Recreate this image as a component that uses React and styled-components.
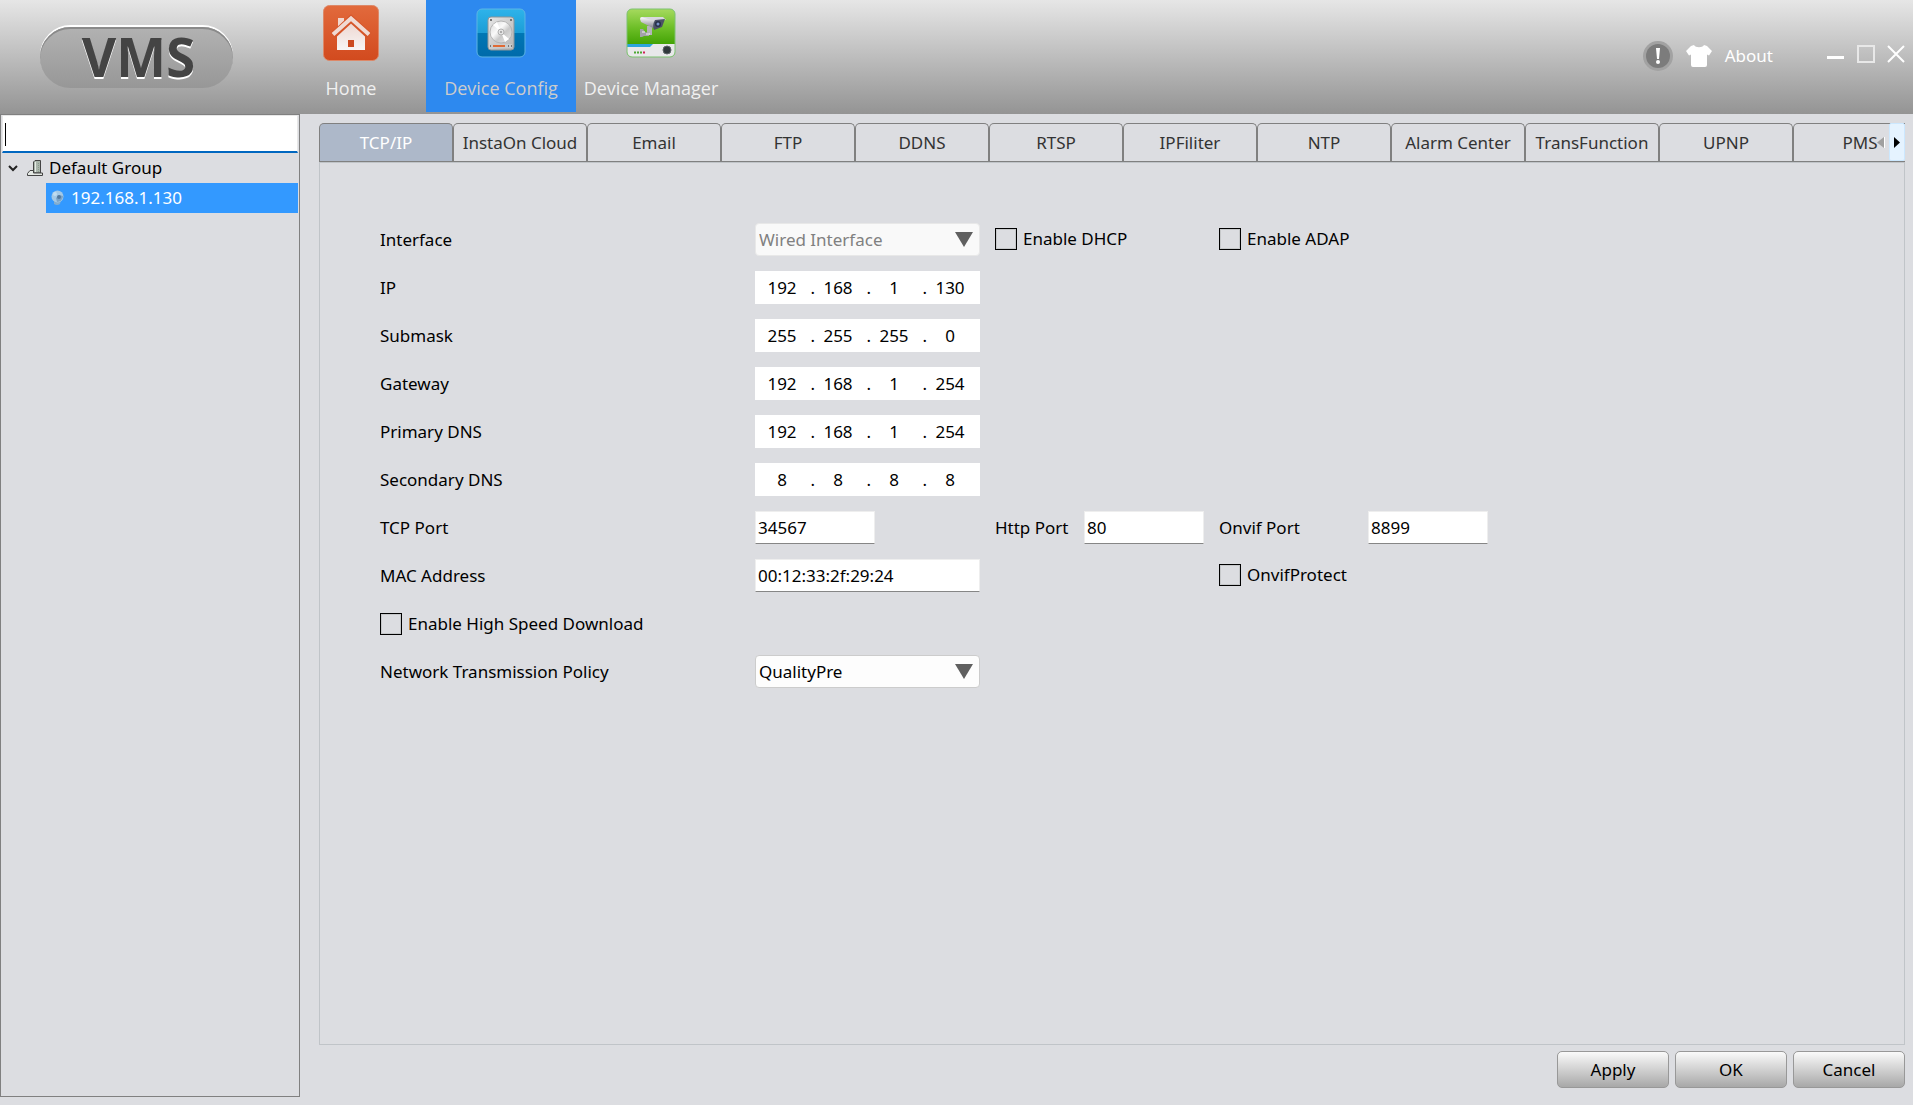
import React, { useState } from 'react'
import styled, { createGlobalStyle } from 'styled-components'

const tabs = [
    'TCP/IP', 'InstaOn Cloud', 'Email', 'FTP', 'DDNS', 'RTSP',
    'IPFiliter', 'NTP', 'Alarm Center', 'TransFunction', 'UPNP', 'PMS',
]

const addresses = [
    { id: 'ip', label: 'IP', value: '192.168.1.130' },
    { id: 'submask', label: 'Submask', value: '255.255.255.0' },
    { id: 'gateway', label: 'Gateway', value: '192.168.1.254' },
    { id: 'dns1', label: 'Primary DNS', value: '192.168.1.254' },
    { id: 'dns2', label: 'Secondary DNS', value: '8.8.8.8' },
]

function HomeIcon() {
    return (
        <svg width="56" height="56" viewBox="0 0 56 56" aria-hidden="true">
            <defs>
                <linearGradient id="homeBg" x1="0" y1="0" x2="0" y2="1">
                    <stop offset="0" stopColor="#e26a3c" />
                    <stop offset="1" stopColor="#d24a1e" />
                </linearGradient>
                <linearGradient id="homeFg" x1="0" y1="0" x2="0" y2="1">
                    <stop offset="0" stopColor="#edd6d0" />
                    <stop offset="1" stopColor="#f8f5f4" />
                </linearGradient>
            </defs>
            <rect x="0.5" y="0.5" width="55" height="55" rx="6" fill="url(#homeBg)" stroke="#dd8868" />
            <path d="M15 13h6v7l-6 6z" fill="#f1d8d0" />
            <path d="M28 17 14 30.500V45h28V30.500z" fill="url(#homeFg)" />
            <path d="m10 30.500 18-16.500 18 16.500" fill="none" stroke="#d65529" strokeWidth="7" />
            <path d="m10 29.500 18-16 18 16" fill="none" stroke="#f0dad3" strokeWidth="4" />
            <rect x="25" y="35" width="6" height="7" fill="#cc4a20" />
        </svg>
    )
}

function DiskIcon() {
    return (
        <svg width="50" height="50" viewBox="0 0 50 50" aria-hidden="true">
            <defs>
                <linearGradient id="diskBg" x1="0" y1="0" x2="0" y2="1">
                    <stop offset="0" stopColor="#2eb3ea" />
                    <stop offset="0.5" stopColor="#1c9dd6" />
                    <stop offset="0.5" stopColor="#0077b4" />
                    <stop offset="1" stopColor="#006aaa" />
                </linearGradient>
                <linearGradient id="diskBody" x1="0" y1="0" x2="1" y2="1">
                    <stop offset="0" stopColor="#e6e6e6" />
                    <stop offset="1" stopColor="#b4b4b4" />
                </linearGradient>
                <linearGradient id="platter" x1="0" y1="0" x2="1" y2="1">
                    <stop offset="0" stopColor="#d6d6d6" />
                    <stop offset="0.4" stopColor="#fafafa" />
                    <stop offset="0.6" stopColor="#c8c8c8" />
                    <stop offset="1" stopColor="#ececec" />
                </linearGradient>
            </defs>
            <rect x="1" y="1" width="48" height="48" rx="5" fill="url(#diskBg)" stroke="#5cb4e4" />
            <rect x="12" y="9" width="26" height="33" rx="3" fill="url(#diskBody)" stroke="#8e9598" />
            <circle cx="25" cy="24" r="11" fill="url(#platter)" stroke="#b4b4b4" />
            <path d="m25 24-8-7 4-3z" fill="#fff" />
            <path d="m25 24 8 7-4 3z" fill="#fff" />
            <circle cx="25" cy="24" r="3" fill="#e4e4e4" stroke="#b0b0b0" />
            <circle cx="25" cy="24" r="1" fill="#999" />
            <rect x="14" y="36" width="22" height="4" fill="#c9cccd" />
            <rect x="17" y="37" width="12" height="2" fill="#e06a34" />
            <path d="M14 12h2M34 12h2M14 38h1M32 38h1M35 38h1" stroke="#777" strokeWidth="2" />
        </svg>
    )
}

function CameraIcon() {
    return (
        <svg width="50" height="50" viewBox="0 0 50 50" aria-hidden="true">
            <defs>
                <linearGradient id="camBg" x1="0" y1="0" x2="0" y2="1">
                    <stop offset="0" stopColor="#a6da5e" />
                    <stop offset="0.4" stopColor="#6cbe26" />
                    <stop offset="0.72" stopColor="#44a406" />
                </linearGradient>
                <linearGradient id="camBody" x1="0" y1="0" x2="0" y2="1">
                    <stop offset="0" stopColor="#fff" />
                    <stop offset="1" stopColor="#84848e" />
                </linearGradient>
            </defs>
            <rect x="1" y="1" width="48" height="48" rx="5" fill="url(#camBg)" />
            <path d="M1 36h48v8a5 5 0 0 1-5 5H6a5 5 0 0 1-5-5z" fill="#e8e8ea" />
            <path d="M1 36h26l-3 3H1z" fill="#2ca4dc" />
            <path d="M21 18h5v9h-5z" fill="#b4b4ba" />
            <path d="M14 21h3l2 3 4 1v3h-5l-2 1h-2z" fill="#a2a2aa" />
            <path d="M16 24h3M20 26h4" stroke="#f2f2f2" strokeWidth="1" />
            <path d="M14 11q0-2 2-2h17l-2 10-4 1-12-6z" fill="url(#camBody)" />
            <path d="M15 9h22l3 3-11 1z" fill="#d8d8de" />
            <path d="m29 12 10-1-3 8-8 3q-2-5 1-10z" fill="#4c5266" />
            <circle cx="32" cy="16" r="3" fill="#27304a" />
            <circle cx="32" cy="16" r="1.500" fill="#7a93c6" />
            <path d="M8 44.500h9" stroke="#4ca832" strokeWidth="2" strokeDasharray="2 1" />
            <path d="M17 44.500h2" stroke="#d0245a" strokeWidth="2" />
            <circle cx="41" cy="42" r="4" fill="#30383c" stroke="#5e6668" />
            <rect x="1" y="1" width="48" height="48" rx="5" fill="none" stroke="#7cc270" />
        </svg>
    )
}

function AlertIcon() {
    return (
        <svg width="30" height="30" viewBox="0 0 30 30" aria-hidden="true">
            <circle cx="15" cy="15" r="15" fill="#a2a2a2" />
            <circle cx="15" cy="15" r="12" fill="#7c7c7c" />
            <path d="M13 7h4l-1 11h-2z" fill="#fff" />
            <circle cx="15" cy="21" r="2" fill="#fff" />
        </svg>
    )
}

function ShirtIcon() {
    return (
        <svg width="26" height="22" viewBox="0 0 26 22" aria-hidden="true">
            <path d="M8 0c1.500 3 8.500 3 10 0l3 1 5 5-3 4.500-2-1V20q0 2-2 2H7q-2 0-2-2V9.500l-2 1L0 6l5-5z" fill="#fff" />
        </svg>
    )
}

function GroupIcon() {
    return (
        <svg width="16" height="16" viewBox="0 0 16 16" aria-hidden="true">
            <path d="M6.500 2 8 .5h5.500V13h-7z" fill="#a9b5ab" stroke="#444" />
            <path d="M8.500 2v10" stroke="#e6ebe6" />
            <path d="M.5 13.500 3 10.500h3.500V13h9v2.500H.5z" fill="#e4e8e4" stroke="#444" />
            <path d="M11.500 3v9" stroke="#8b9a8b" strokeDasharray="1 1" />
        </svg>
    )
}

function DeviceIcon() {
    return (
        <svg width="13" height="16" viewBox="0 0 13 16" aria-hidden="true">
            <path d="M3 10h7l-1 4q-3 2-6 0z" fill="#82add0" />
            <circle cx="6.500" cy="6.500" r="6" fill="#a4c9e6" />
            <path d="M6 12a6 6 0 0 0 6-6l-4-1-3 3z" fill="#7ba4c8" />
            <circle cx="8" cy="7" r="2" fill="#54799c" />
            <circle cx="4" cy="4" r="2" fill="#c0dcf0" />
        </svg>
    )
}

const navItems = [
    { label: 'Home', icon: <HomeIcon /> },
    { label: 'Device Config', icon: <DiskIcon />, active: true },
    { label: 'Device Manager', icon: <CameraIcon /> },
]

function AddressField({ id, label, value }) {
    return (
        <>
            <Label htmlFor={`${id}-0`}>{label}</Label>
            <Address>
                {value.split('.').map((part, i) => (
                    <React.Fragment key={i}>
                        {i > 0 && <Dot>.</Dot>}
                        <Octet id={`${id}-${i}`} aria-label={`${label} ${i + 1}`} defaultValue={part} />
                    </React.Fragment>
                ))}
            </Address>
        </>
    )
}

function Dropdown({ id, value, disabled }) {
    return (
        <SelectWrap>
            <Select id={id} defaultValue={value} disabled={disabled}>
                <option>{value}</option>
            </Select>
            <Arrow width="18" height="15" viewBox="0 0 18 15" aria-hidden="true">
                <path d="M0 0h18L9 15z" fill="#606060" />
            </Arrow>
        </SelectWrap>
    )
}

function App() {
    const [tab, setTab] = useState('TCP/IP')
    return (
        <Page>
            <GlobalStyle />
            <Header>
                <Logo>VMS</Logo>
                <Nav>
                    {
                        navItems.map((item) => {
                            return <NavButton key={item.label} $active={item.active}>
                                <NavIcon>{item.icon}</NavIcon>
                                {item.label}
                            </NavButton>
                        })
                    }
                </Nav>
                <Tools>
                    <ToolButton aria-label="Alarms"><AlertIcon /></ToolButton>
                    <ToolButton aria-label="Skin"><ShirtIcon /></ToolButton>
                    <ToolButton>About</ToolButton>
                </Tools>
                <WindowButtons>
                    <ToolButton aria-label="Minimize">
                        <svg width="18" height="18"><path d="M0 12.500h17" stroke="#fff" strokeWidth="3" /></svg>
                    </ToolButton>
                    <ToolButton aria-label="Maximize">
                        <svg width="18" height="18"><path d="M1 1h16v16H1z" stroke="#e8e8e8" strokeWidth="2" fill="none" /></svg>
                    </ToolButton>
                    <ToolButton aria-label="Close">
                        <svg width="18" height="18"><path d="m1 1 16 16M17 1 1 17" stroke="#fff" strokeWidth="2" /></svg>
                    </ToolButton>
                </WindowButtons>
            </Header>
            <Body>
                <Sidebar>
                    <Search type="text" aria-label="Search device" />
                    <Group>
                        <svg width="10" height="7" viewBox="0 0 10 7" aria-hidden="true">
                            <path d="m1 1 4 4 4-4" fill="none" stroke="#222" strokeWidth="2" />
                        </svg>
                        <GroupIcon />
                        Default Group
                    </Group>
                    <Device><DeviceIcon />192.168.1.130</Device>
                </Sidebar>
                <Main>
                    <TabBar>
                        <TabList role="tablist">
                            {
                                tabs.map((name) => {
                                    return <Tab key={name} role="tab" aria-selected={tab === name} $active={tab === name} onClick={() => setTab(name)}>
                                        {name}
                                    </Tab>
                                })
                            }
                        </TabList>
                        <Scroller>
                            <ScrollButton aria-label="Previous tabs">
                                <svg width="8" height="11"><path d="M7 0v11L0 5.500z" fill="#a0a0a0" /><path d="M7.500 0v11" stroke="#fff" /></svg>
                            </ScrollButton>
                            <ScrollButton aria-label="Next tabs" $hover>
                                <svg width="6" height="11"><path d="M0 0v11l6-5.500z" fill="#000" /></svg>
                            </ScrollButton>
                        </Scroller>
                    </TabBar>
                    <Panel>
                        <Form>
                            <Label htmlFor="iface">Interface</Label>
                            <Dropdown id="iface" value="Wired Interface" disabled />
                            <Check $column={3}><input type="checkbox" />Enable DHCP</Check>
                            <Check $column={5}><input type="checkbox" />Enable ADAP</Check>

                            {addresses.map((a) => <Row key={a.id}><AddressField {...a} /></Row>)}

                            <Label htmlFor="tcp">TCP Port</Label>
                            <Field id="tcp" defaultValue="34567" />
                            <Label htmlFor="http">Http Port</Label>
                            <Field id="http" defaultValue="80" />
                            <Label htmlFor="onvif">Onvif Port</Label>
                            <Field id="onvif" defaultValue="8899" />

                            <Label htmlFor="mac">MAC Address</Label>
                            <Field id="mac" defaultValue="00:12:33:2f:29:24" $wide />
                            <Check $column={5}><input type="checkbox" />OnvifProtect</Check>

                            <Row>
                                <Check $column={1}><input type="checkbox" />Enable High Speed Download</Check>
                            </Row>

                            <Label htmlFor="policy">Network Transmission Policy</Label>
                            <Dropdown id="policy" value="QualityPre" />
                        </Form>
                    </Panel>
                    <Footer>
                        <Button>Apply</Button>
                        <Button>OK</Button>
                        <Button>Cancel</Button>
                    </Footer>
                </Main>
            </Body>
        </Page>
    )
}

const GlobalStyle = createGlobalStyle`
*{
    box-sizing: border-box;
}
body{
    margin: 0;
    background-color: #dcdde1;
}
body, button, input, select{
    font-family: "Noto Sans", "Open Sans", sans-serif;
    font-size: 17px;
    line-height: 24px;
    color: #000;
}
button{
    padding: 0;
    border: none;
    background: none;
}
svg{
    display: block;
    flex-shrink: 0;
}
`

const Page = styled.div`
    display: flex;
    flex-direction: column;
    min-height: 100vh;
`

const Header = styled.header`
    display: flex;
    align-items: center;
    height: 114px;
    padding: 0 8px 0 40px;
    background: linear-gradient(#e6e6e6, #949494);
`

const Logo = styled.div`
    width: 193px;
    height: 61px;
    padding-left: 4px;
    border-radius: 32px;
    background: linear-gradient(#b2b2b2, #979797);
    box-shadow: 0 -2px 0 #fff, inset 0 2px 0 #8a8a8a;
    color: #444;
    font-family: "Open Sans", sans-serif;
    font-size: 53px;
    font-weight: 700;
    line-height: 60px;
    text-align: center;
    text-shadow: 0 2px 0 #fff;
`

const Nav = styled.nav`
    display: flex;
    align-self: flex-start;
    margin-left: 43px;
`

const NavButton = styled.button`
    display: flex;
    flex-direction: column;
    align-items: center;
    gap: 15px;
    width: 150px;
    height: 112px;
    padding-top: 5px;
    background-color: ${(p) => (p.$active ? '#2d89ef' : 'transparent')};
    color: ${(p) => (p.$active ? '#cccccc' : '#f0f0f0')};
    font-family: "Open Sans", sans-serif;
    font-size: 18px;
    white-space: nowrap;
`

const NavIcon = styled.span`
    display: flex;
    align-items: center;
    height: 56px;
`

const Tools = styled.div`
    display: flex;
    align-items: center;
    gap: 13px;
    margin: 0 0 2px auto;
`

const ToolButton = styled.button`
    color: #fff;
`

const WindowButtons = styled.div`
    display: flex;
    gap: 12px;
    margin: 0 0 6px 54px;
`

const Body = styled.div`
    display: flex;
    flex: 1;
`

const Sidebar = styled.aside`
    width: 300px;
    margin-bottom: 8px;
    flex-shrink: 0;
    padding: 0 1px;
    border: 1px solid #808080;
`

/* text cursor is painted as the second background layer */
const Search = styled.input`
    display: block;
    width: 100%;
    height: 38px;
    border: 1px solid #e8e8e8;
    border-bottom: 2px solid #0067c0;
    outline: none;
    background: linear-gradient(#000, #000) 2px 7px / 1px 23px no-repeat, #fff;
`

const Group = styled.div`
    display: flex;
    align-items: center;
    height: 30px;
    padding-left: 6px;
    svg + svg{
        margin: 0 6px 0 9px;
    }
`

const Device = styled.div`
    display: flex;
    align-items: center;
    gap: 7px;
    height: 30px;
    margin-left: 44px;
    padding-left: 5px;
    background-color: #3399ff;
    color: #fff;
`

const Main = styled.main`
    display: flex;
    flex: 1;
    flex-direction: column;
    min-width: 0;
    padding: 9px 8px 17px 19px;
`

const TabBar = styled.div`
    position: relative;
`

const TabList = styled.div`
    display: flex;
    overflow: hidden;
    border-bottom: 1px solid #808080;
`

const Tab = styled.button`
    flex: 0 0 134px;
    height: 38px;
    border: 1px solid #808080;
    border-bottom: none;
    border-radius: 5px 5px 0 0;
    background-color: ${(p) => (p.$active ? '#adb8c9' : 'transparent')};
    color: ${(p) => (p.$active ? '#fff' : '#333')};
    white-space: nowrap;
`

/* floats over the clipped end of the tab strip */
const Scroller = styled.div`
    position: absolute;
    top: 0;
    right: 0;
    display: flex;
    height: 38px;
`

const ScrollButton = styled.button`
    display: flex;
    align-items: center;
    justify-content: center;
    width: 16px;
    border: 1px solid ${(p) => (p.$hover ? '#cce8ff' : 'transparent')};
    border-radius: 2px;
    background-color: ${(p) => (p.$hover ? '#e5f3ff' : 'transparent')};
`

const Panel = styled.section`
    flex: 1;
    padding: 60px;
    border: 1px solid #c0c4c8;
`

const Form = styled.form`
    display: grid;
    grid-template-columns: 375px 240px 89px 135px 149px 120px;
    grid-auto-rows: 33px;
    row-gap: 15px;
    align-items: center;
`

const Row = styled.div`
    display: grid;
    grid-column: 1 / -1;
    grid-template-columns: subgrid;
    align-items: center;
`

const Label = styled.label`
    white-space: nowrap;
`

const SelectWrap = styled.div`
    position: relative;
    width: 225px;
`

const Select = styled.select`
    display: block;
    appearance: none;
    width: 100%;
    height: 33px;
    padding: 0 28px 0 3px;
    border: 1px solid #ccc;
    border-radius: 4px;
    background-color: #fdfdfd;
    &:disabled{
        border-color: #e8e8e8;
        background-color: #f9f9f9;
        color: #808080;
        opacity: 1;
    }
`

const Arrow = styled.svg`
    position: absolute;
    top: 9px;
    right: 7px;
    pointer-events: none;
`

const Address = styled.div`
    display: flex;
    align-items: center;
    width: 225px;
    height: 33px;
    padding-left: 5px;
    background-color: #fff;
`

const Octet = styled.input`
    width: 44px;
    padding: 0;
    border: none;
    background: none;
    text-align: center;
`

const Dot = styled.span`
    width: 12px;
    padding-right: 1px;
    text-align: right;
`

const Field = styled.input`
    width: ${(p) => (p.$wide ? '225px' : '120px')};
    height: 33px;
    padding: 0 2px;
    border: 1px solid #eee;
    border-bottom-color: #868686;
`

const Check = styled.label`
    grid-column: ${(p) => p.$column} / span 2;
    align-self: start;
    display: flex;
    align-items: center;
    gap: 6px;
    height: 32px;
    white-space: nowrap;
    input{
        appearance: none;
        width: 22px;
        height: 22px;
        margin: 0;
        border: 1px solid #000;
        box-shadow: inset 0 0 0 1px #c6c8ca;
    }
`

const Footer = styled.footer`
    display: flex;
    justify-content: flex-end;
    gap: 6px;
    padding-top: 6px;
`

const Button = styled.button`
    width: 112px;
    height: 37px;
    border: 1px solid #989898;
    border-radius: 5px;
    background: linear-gradient(#fafafa, #a8a8a8);
`

export default App
